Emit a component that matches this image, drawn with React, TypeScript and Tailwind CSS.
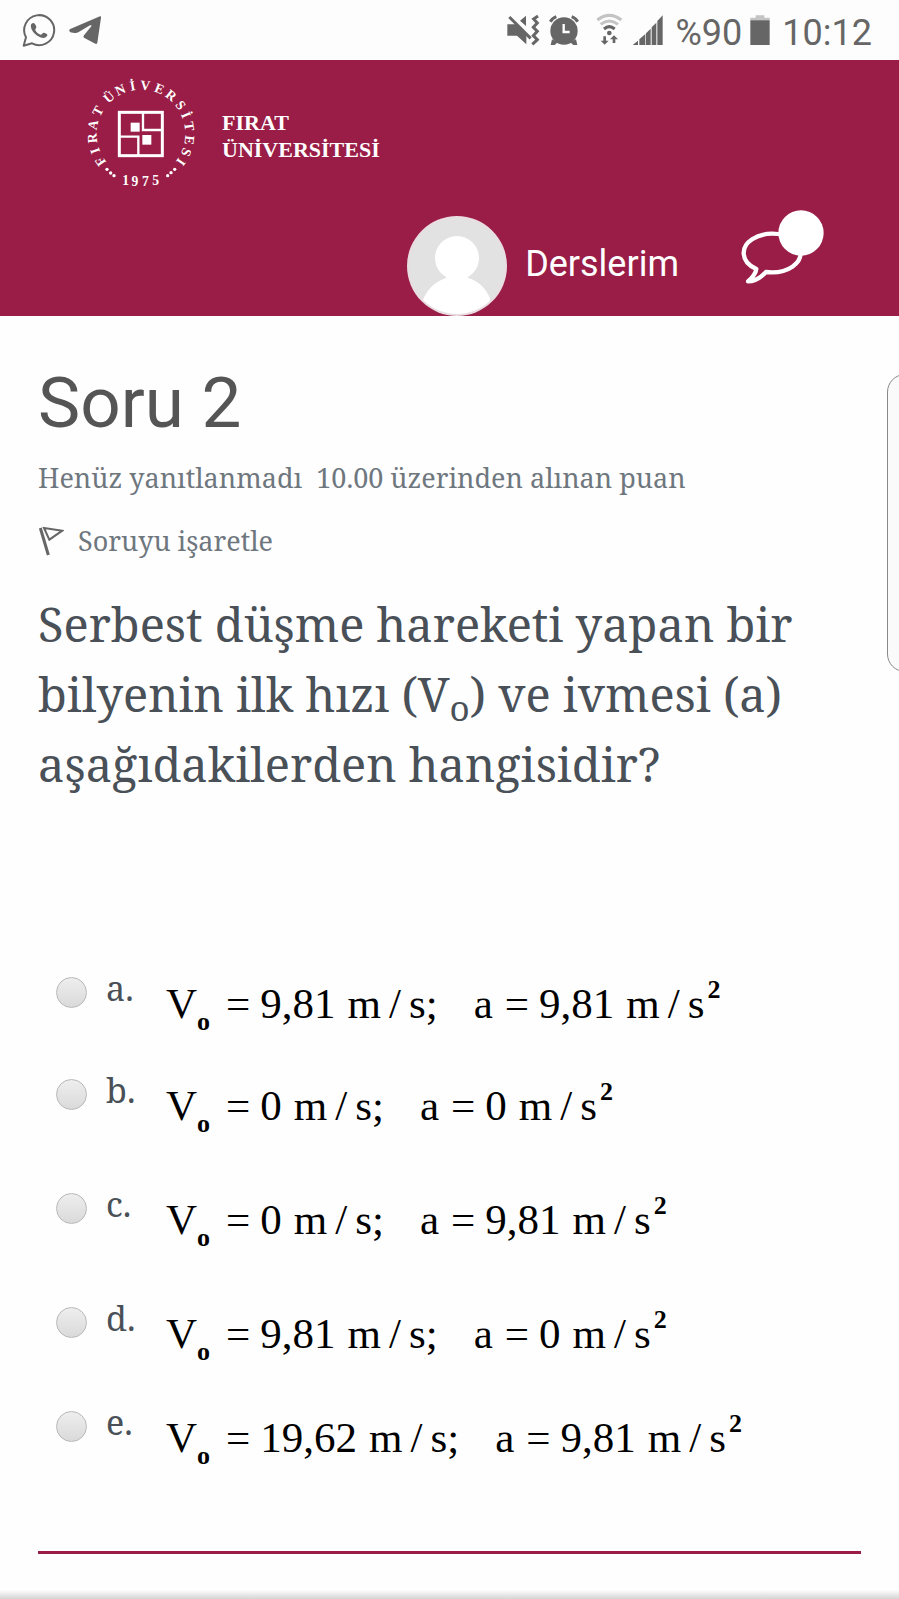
import React from "react";

const ringLetters: [string, number][] = [
  ["F", -124], ["I", -110], ["R", -95], ["A", -79], ["T", -62],
  ["Ü", -41], ["N", -25], ["İ", -10], ["V", 5], ["E", 22], ["R", 38],
  ["S", 54], ["İ", 67], ["T", 81], ["E", 97], ["S", 112], ["I", 125],
];

const yearDigits: [string, number, number][] = [
  ["1", 166, 374], ["9", 194, 377], ["7", 225, 379], ["5", 256, 374],
];

const ringDots: [number, number][] = [
  [110, 328], [121, 339], [131, 347], [292, 347], [302, 338], [313, 328],
];

function UniversityLogo() {
  return (
    <svg viewBox="41 51 342 342" className="size-[114px] overflow-visible" role="img" aria-label="Fırat Üniversitesi 1975">
      <g fill="#fff" fontFamily="'Liberation Serif', serif" fontSize="41" fontWeight="700" textAnchor="middle">
        {ringLetters.map(([letter, angle], i) => (
          <text key={i} x="212" y="89" transform={`rotate(${angle} 212 222)`}>{letter}</text>
        ))}
        {yearDigits.map(([digit, x, y], i) => (
          <text key={i} x={x} y={y}>{digit}</text>
        ))}
        {ringDots.map(([x, y], i) => <circle key={i} cx={x} cy={y} r="5" />)}
        <rect x="181" y="188" width="27" height="27" />
        <rect x="216" y="225" width="27" height="29" />
      </g>
      <g fill="none" stroke="#fff">
        <rect x="147" y="157" width="129" height="130" strokeWidth="9" />
        <path d="M218 157V210H276M147 230H204V287" strokeWidth="7" />
      </g>
    </svg>
  );
}

function StatusBar() {
  return (
    <div className="flex h-[60px] items-center justify-between bg-[#fdfdfd] pr-[27px] pl-[22px] text-[#666]">
      <div className="flex items-center gap-3">
        <svg viewBox="66 36 102 102" className="size-[34px]" aria-hidden="true">
          <path d="M71 134L78 109A45 45 0 1 1 96 127Z" fill="none" stroke="currentColor" strokeWidth="6" strokeLinejoin="round" />
          <path d="M95 68C101 63 106 68 109 77C110 82 104 84 106 88C109 94 115 99 122 101C126 101 128 94 132 95C142 98 144 101 141 105C136 113 125 112 115 106C103 99 94 88 93 78C92 73 93 70 95 68Z" fill="currentColor" />
        </svg>
        <svg viewBox="201 42 102 96" className="h-8 w-[34px]" aria-hidden="true">
          <path d="M206 88L297 49Q301 48 300 53L289 128Q288 133 283 131L249 113Q245 110 249 106L271 79Q273 74 267 76L232 97Q227 100 220 99L208 97Q202 92 206 88Z" fill="currentColor" />
        </svg>
      </div>
      <div className="flex items-center">
        <svg viewBox="42 36 474 102" className="h-[34px] w-[158px]" aria-hidden="true">
          <g fill="currentColor">
            <path d="M46 70H74L103 98V130L75 104H46ZM84 59L102 44V75Z" />
            <circle cx="216" cy="90" r="41" />
            <path d="M180 115L197 124L188 132H176ZM252 115L235 124L244 132H256Z" />
            <path d="M422 132L438 119V132ZM442 115L460 99V132H442ZM462 97L476 83V132H462ZM479 79L493 65V132H479ZM496 60L512 43V132H496Z" />
            <path d="M334 106H342V119H350L338 131L326 119H334ZM362 126H370V115H378L366 103L354 115H362Z" />
            <circle cx="352" cy="96" r="7" />
          </g>
          <g fill="none" stroke="currentColor" strokeWidth="9">
            <path d="M52 48L116 112" />
            <path d="M138 45L125 54L136 66L124 79L136 91L124 104L136 116L121 130" />
            <path d="M175 62Q181 51 193 47M239 47Q251 51 257 62" />
            <path d="M336 84Q352 70 368 84" />
            <path d="M316 57Q352 29 388 57M326 70Q352 50 378 70" stroke="#c4c4c4" />
          </g>
          <path d="M215 69V93H233" fill="none" stroke="#fff" strokeWidth="7" />
        </svg>
        <span className="ml-3 pt-[6px] font-[Roboto,sans-serif] text-[36px] leading-none">%90</span>
        <svg viewBox="780 42 58 90" className="ml-2 h-[30px] w-5" aria-hidden="true">
          <path d="M780 60V50H796V43H822V50H838V60Z" fill="#c4c4c4" />
          <path d="M780 58H838V132H780Z" fill="currentColor" />
        </svg>
        <span className="ml-3 pt-[6px] font-[Roboto,sans-serif] text-[36px] leading-none">10:12</span>
      </div>
    </div>
  );
}

function SiteHeader() {
  return (
    <header className="bg-[#991d46] pt-[17px] text-white">
      <a href="#" className="flex items-center gap-6 pl-[84px]">
        <UniversityLogo />
        <span className="pt-1 font-['Liberation_Serif',serif] text-[22px] leading-[27px] font-bold">
          FIRAT<br />ÜNİVERSİTESİ
        </span>
      </a>
      <nav className="mt-[19px] flex items-start justify-end pr-[75px]">
        <a href="#" aria-label="Profil" className="mt-[6px]">
          <svg viewBox="0 0 100 100" className="size-[100px]" aria-hidden="true">
            <defs>
              <clipPath id="avatar"><circle cx="50" cy="50" r="48" /></clipPath>
            </defs>
            <circle cx="50" cy="50" r="50" fill="#eadde1" />
            <circle cx="50" cy="50" r="48" fill="#e2e2e2" />
            <g fill="#fff" clipPath="url(#avatar)">
              <circle cx="50" cy="42" r="22" />
              <path d="M39 58V62C27 66 20 74 16 84L18 100H82L83 82C79 73 72 65 61 62V58Z" />
            </g>
          </svg>
        </a>
        <a href="#" className="mt-[30px] ml-[18px] font-[Roboto,sans-serif] text-[36px] leading-[48px]">Derslerim</a>
        <button type="button" aria-label="Mesajlar" className="ml-[63px]">
          <svg viewBox="1056 30 246 222" className="h-[74px] w-[82px] overflow-visible" aria-hidden="true">
            <path d="M1099 207C1074 196 1061 180 1061 158C1061 127 1100 101 1147 101C1194 101 1232 127 1232 159C1232 191 1194 217 1147 217C1140 217 1135 217 1128 216C1113 232 1094 244 1074 244C1087 233 1097 222 1099 207Z" fill="none" stroke="#fff" strokeWidth="13" strokeLinejoin="round" />
            <circle cx="1233" cy="99" r="68" fill="#fff" />
          </svg>
        </button>
      </nav>
    </header>
  );
}

type Option = { id: string; v: string; a: string; row: string };

const options: Option[] = [
  { id: "a", v: "9,81", a: "9,81", row: "h-[102px]" },
  { id: "b", v: "0", a: "0", row: "h-[114px]" },
  { id: "c", v: "0", a: "9,81", row: "h-[114px]" },
  { id: "d", v: "9,81", a: "0", row: "h-[104px]" },
  { id: "e", v: "19,62", a: "9,81", row: "h-[102px]" },
];

function Unit() {
  return (
    <>
      <span className="ml-3">m</span>
      <span className="ml-2">/</span>
      <span className="ml-2">s</span>
    </>
  );
}

function Formula({ v, a }: { v: string; a: string }) {
  return (
    <span className="flex items-baseline font-['Liberation_Serif',serif] text-[43px] leading-[56px] whitespace-nowrap text-black">
      <span>V</span>
      <sub className="-bottom-3 text-[26px] leading-none font-bold">o</sub>
      <span className="ml-4">=</span>
      <span className="ml-[10px]">{v}</span>
      <Unit />
      <span>;</span>
      <span className="ml-9">a</span>
      <span className="ml-3">=</span>
      <span className="ml-[10px]">{a}</span>
      <Unit />
      <sup className="-top-5 ml-[3px] text-[26px] leading-none font-bold">2</sup>
    </span>
  );
}

export default function App() {
  return (
    <div className="relative min-h-screen overflow-x-hidden bg-[#fefefe]">
      <StatusBar />
      <SiteHeader />
      <main className="px-[38px] pt-[45px] font-['Noto_Serif','DejaVu_Serif',serif]">
        <h1 className="font-[Roboto,sans-serif] text-[71px] leading-[84px] text-[#555]">Soru 2</h1>
        <p className="mt-[11px] text-[27px] leading-[44px] text-[#6f777e]">
          Henüz yanıtlanmadı&nbsp; 10.00 üzerinden alınan puan
        </p>
        <button type="button" className="mt-[19px] flex items-center gap-[14px] text-[27px] leading-[44px] text-[#6f777e]">
          <svg viewBox="116 555 78 90" className="h-[30px] w-[26px]" fill="none" stroke="#666" aria-hidden="true">
            <path d="M123 561L147 642" strokeWidth="9" />
            <path d="M134 561L189 569L150 596Z" strokeWidth="6" />
          </svg>
          Soruyu işaretle
        </button>
        <p className="mt-[26px] text-[47px] leading-[70px] text-[#495057]">
          Serbest düşme hareketi yapan bir bilyenin ilk hızı (V<sub className="text-[35px] leading-none">o</sub>) ve ivmesi (a) aşağıdakilerden hangisidir?
        </p>
        <fieldset className="mt-[166px] pl-[18px]">
          {options.map((o) => (
            <div key={o.id} className={`flex items-start ${o.row}`}>
              <input
                id={`option-${o.id}`}
                type="radio"
                name="answer"
                className="mt-3 size-[31px] shrink-0 appearance-none rounded-full border border-[#b8b8b8] bg-linear-to-b from-[#eee] to-[#dadada] checked:border-8"
              />
              <label htmlFor={`option-${o.id}`} className="flex items-start">
                <span className="w-[79px] pl-[19px] text-[34px] leading-[46px] text-[#495057]">{o.id}.</span>
                <span className="pt-[11px]"><Formula v={o.v} a={o.a} /></span>
              </label>
            </div>
          ))}
        </fieldset>
        <hr className="mt-[50px] border-t-[3px] border-[#991d46]" />
      </main>
      <div className="mt-9 h-[10px] bg-linear-to-b from-[#fefefe] to-[#d0d0d0]" />
      <aside className="absolute top-[374px] right-0 h-[298px] w-3 overflow-hidden">
        <div className="h-full w-10 rounded-[18px] border border-[#888] bg-[#fafafa]" />
      </aside>
    </div>
  );
}
